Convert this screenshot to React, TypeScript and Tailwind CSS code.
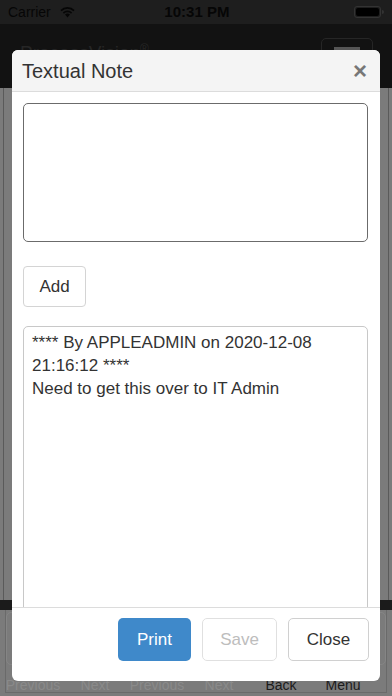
import { useState } from 'react';

const font = { fontFamily: '"Liberation Sans", Arial, sans-serif' };

const toolbar = [
  { label: 'Previous', dim: true },
  { label: 'Next', dim: true },
  { label: 'Previous', dim: true },
  { label: 'Next', dim: true },
  { label: 'Back', dim: false },
  { label: 'Menu', dim: false },
];

const App = () => {
  const [note, setNote] = useState('');

  return (
    <div className="relative w-[392px] h-[696px] overflow-hidden bg-[#7b7b7b]" style={font}>
      {/* status bar (dimmed by the overlay) */}
      <div className="h-[24px] bg-[#1e1e1e] flex items-center px-[8px] text-[#060606] text-[14px]">
        <span>Carrier</span>
        <svg width="17" height="12" viewBox="0 0 17 12" className="ml-[8px]">
          <path d="M8.5 11.5 L6 8.6 A3.8 3.8 0 0 1 11 8.6 Z" fill="#060606" />
          <path d="M3.8 6.4 A6.8 6.8 0 0 1 13.2 6.4 L12 7.7 A5 5 0 0 0 5 7.7 Z" fill="#060606" />
          <path d="M1.4 4 A10 10 0 0 1 15.6 4 L14.4 5.3 A8.2 8.2 0 0 0 2.6 5.3 Z" fill="#060606" />
        </svg>
        <span className="flex-1 text-center font-bold text-[15px] pr-[36px]">10:31 PM</span>
        <div className="flex items-center">
          <div className="w-[27px] h-[12px] rounded-[3px] border border-[#333] p-[1px]">
            <div className="w-full h-full rounded-[2px] bg-[#000]" />
          </div>
          <div className="w-[2px] h-[4px] bg-[#333] ml-[1px] rounded-r-sm" />
        </div>
      </div>

      {/* navbar */}
      <div className="h-[64px] bg-[#121212] flex items-center justify-between px-[20px]">
        <span className="text-[#262626] text-[19px] -mt-[6px]">
          ProcessVision<sup className="text-[12px]">®</sup>
        </span>
        <div className="w-[52px] h-[36px] rounded-[5px] border border-[#262626] flex flex-col items-center justify-center gap-[5px] -mr-[1px]">
          <div className="w-[26px] h-[3px] bg-[#555]" />
          <div className="w-[26px] h-[3px] bg-[#555]" />
          <div className="w-[26px] h-[3px] bg-[#555]" />
        </div>
      </div>

      {/* page content behind overlay */}
      <div className="h-[512px] flex px-[3px]">
        <div className="flex-1 border-x border-[#5a5a5a] bg-[#7b7b7b]" />
      </div>
      <div className="h-[10px] bg-[#1b1b1b]" />

      {/* bottom toolbar */}
      <div className="h-[86px] px-[5px] pb-[3px]">
        <div className="h-full border-x border-b border-[#6a6a6a] flex flex-col">
          <div className="flex gap-[6px] pt-[2px]">
            {toolbar.map((t, i) => (
              <div key={i} className="flex-1 h-[53px] rounded-[5px] border border-[#858585]" />
            ))}
          </div>
          <div className="flex mt-[10px] -ml-[4px] text-[14px]">
            {toolbar.map((t, i) => (
              <span
                key={i}
                className={`w-[62px] text-center ${t.dim ? 'text-[#8a8a8a]' : 'text-[#1c1c1c]'}`}
              >
                {t.label}
              </span>
            ))}
          </div>
        </div>
      </div>

      {/* modal */}
      <div className="absolute left-[12px] top-[50px] w-[368px] h-[631px] bg-white rounded-[6px] overflow-hidden flex flex-col">
        <div className="h-[42px] bg-[#f4f4f4] border-b border-[#dcdcdc] flex items-center justify-between pl-[10px] pr-[13px] shrink-0">
          <span className="text-[20px] text-[#333]">Textual Note</span>
          <span className="text-[24px] font-bold text-[#777] leading-none">×</span>
        </div>

        <div className="flex-1 min-h-0 overflow-hidden px-[11px] pt-[11px] flex flex-col">
          <textarea
            value={note}
            onChange={(e) => setNote(e.target.value)}
            className="w-[345px] h-[139px] shrink-0 rounded-[5px] border border-[#6b6b6b] resize-none outline-none p-[8px] text-[17px]"
          />
          <button className="mt-[24px] w-[63px] h-[41px] shrink-0 rounded-[4px] border border-[#d4d4d4] bg-white text-[17px] text-[#333]">
            Add
          </button>
          <div className="mt-[19px] w-[345px] h-[320px] shrink-0 rounded-[5px] border border-[#c8c8c8] px-[8px] pt-[4px] text-[17px] leading-[23px] text-[#333]">
            <div>**** By APPLEADMIN on 2020-12-08 21:16:12 ****</div>
            <div>Need to get this over to IT Admin</div>
          </div>
        </div>

        <div className="h-[74px] shrink-0 border-t border-[#dcdcdc] flex justify-end gap-[11px] pr-[11px] pt-[10px]">
          <button className="w-[73px] h-[43px] rounded-[5px] bg-[#3f89ca] text-white text-[17px]">Print</button>
          <button className="w-[75px] h-[43px] rounded-[5px] border border-[#e0e0e0] bg-white text-[#bdbdbd] text-[17px]">
            Save
          </button>
          <button className="w-[81px] h-[43px] rounded-[5px] border border-[#d0d0d0] bg-white text-[#333] text-[17px]">
            Close
          </button>
        </div>
      </div>
    </div>
  );
};

export default App;
